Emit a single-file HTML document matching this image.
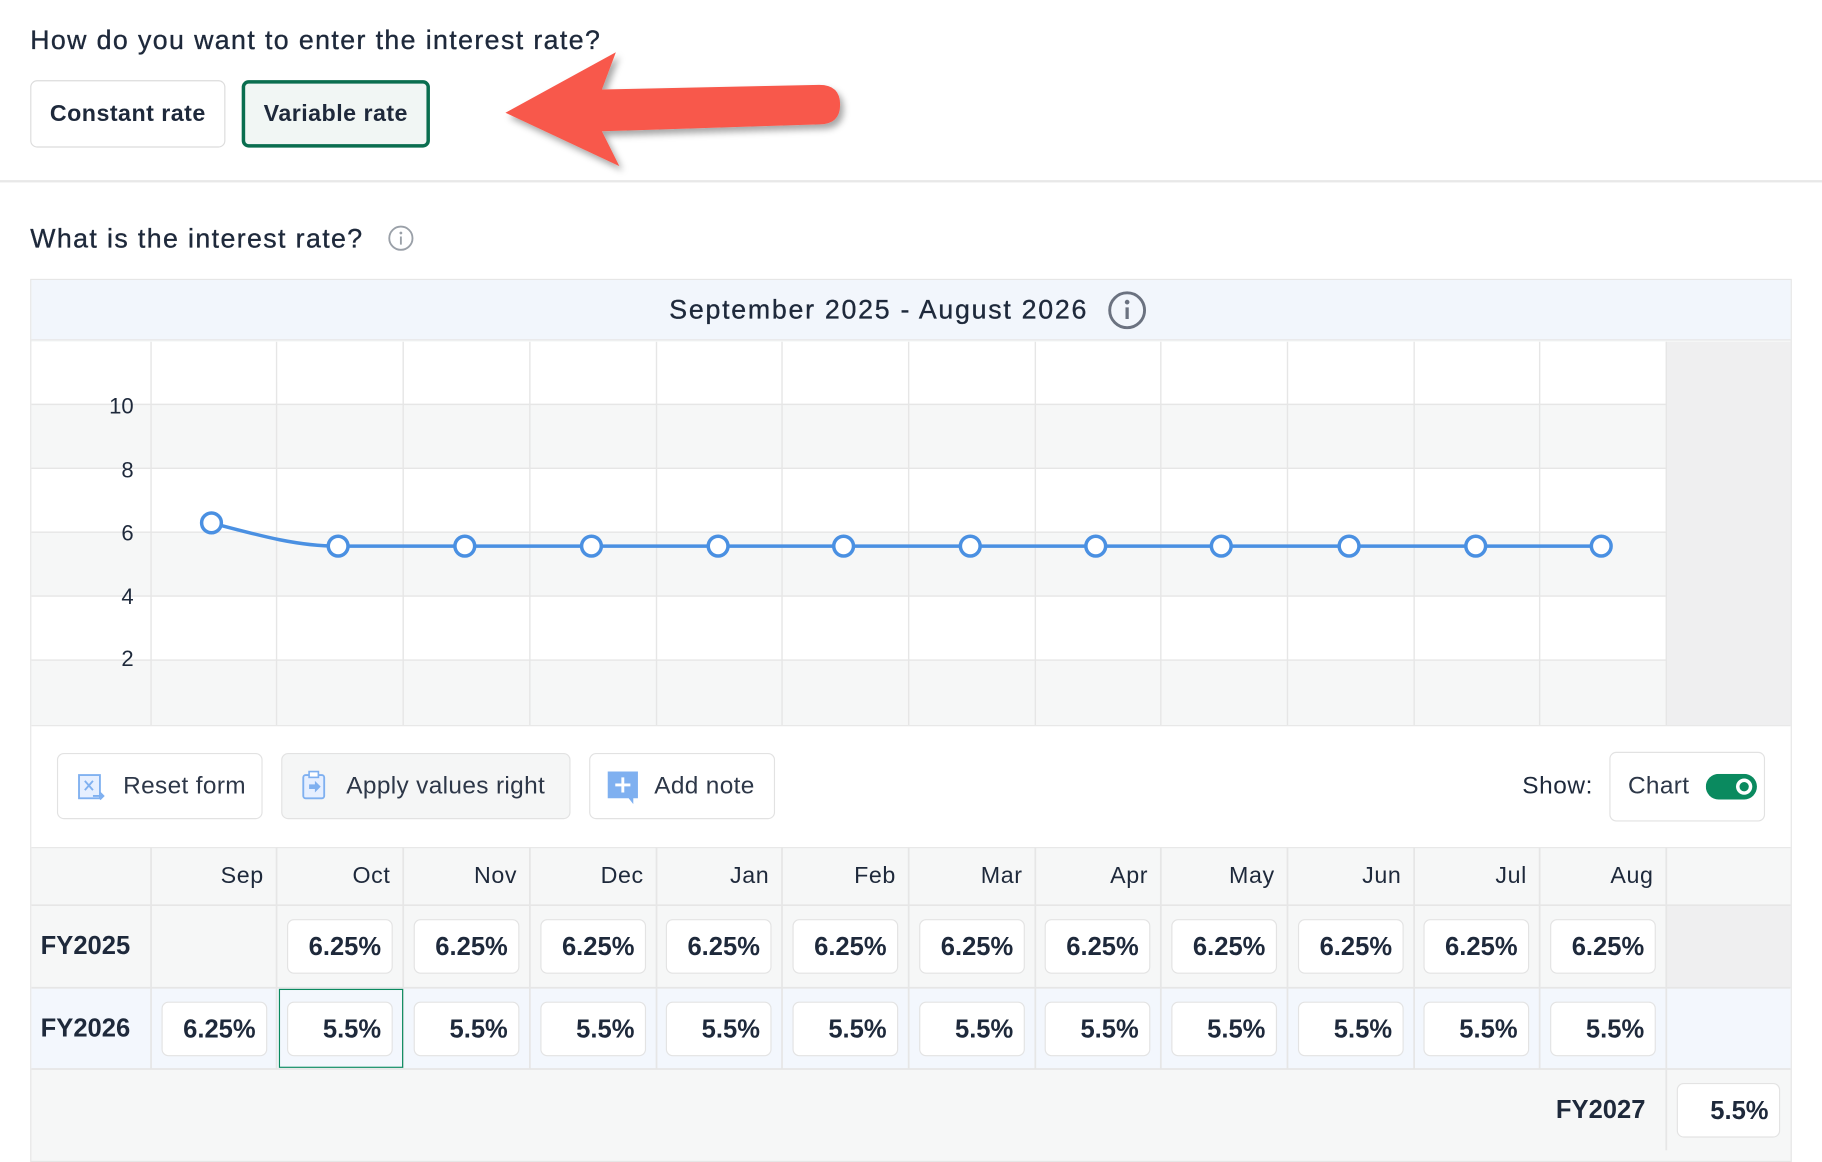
<!DOCTYPE html>
<html><head><meta charset="utf-8"><style>
*{box-sizing:border-box;margin:0;padding:0}
html,body{width:1822px;height:1150px;overflow:hidden;background:#fff}
#w{position:absolute;left:0;top:0;width:1568px;height:990px;transform:scale(1.16199);transform-origin:0 0;font-family:"Liberation Sans",sans-serif;color:#1e293b}
.a{position:absolute}
.btn{position:absolute;border:1.5px solid #dcdcdc;border-radius:6px;font-size:20px;display:flex;align-items:center;justify-content:center;font-weight:bold;letter-spacing:.4px}
.tb{position:absolute;border:1.5px solid #e2e2e2;border-radius:6px;font-size:21px;display:flex;align-items:center;color:#2d3748;background:#fff;letter-spacing:.3px}
.inp{position:absolute;background:#fff;border:1.5px solid #e3e3e3;border-radius:6px;height:47px;font-size:22px;font-weight:bold;text-align:right;padding-right:9px;line-height:45px}
.mon{position:absolute;top:730px;height:49px;line-height:49px;font-size:20px;text-align:right;color:#1e293b;letter-spacing:.5px}
.fy{position:absolute;left:35px;font-size:22px;font-weight:bold}
.h{position:absolute;font-size:23px;letter-spacing:1.2px;color:#1e293b;-webkit-text-stroke:.3px #1e293b}
</style></head><body><div id="w">
<div class="h" style="left:26px;top:21px">How do you want to enter the interest rate?</div>
<div class="btn" style="left:26px;top:69px;width:168px;height:58px">Constant rate</div>
<div class="btn" style="left:208px;top:69px;width:162px;height:58px;border:3px solid #0a6e4f;background:#f1f6f4">Variable rate</div>
<svg class="a" style="left:420px;top:35px" width="320" height="120"><defs><filter id="s"><feDropShadow dx="3" dy="4" stdDeviation="3" flood-color="#000" flood-opacity=".35"/></filter></defs>
<path filter="url(#s)" fill="#f8584b" d="M15 62 L110 10 L98 42 L285 38 Q303 38 303 55 Q303 72 285 72 L98 78 L113 108 Z"/></svg>
<div class="a" style="left:0;top:155px;width:1568px;height:2px;background:#e8e8e8"></div>
<div class="h" style="left:26px;top:192px">What is the interest rate?</div>
<svg class="a" style="left:333px;top:193px" width="24" height="24"><circle cx="12" cy="12" r="10" fill="none" stroke="#9aa0a8" stroke-width="1.6"/><circle cx="12" cy="7.5" r="1.2" fill="#9aa0a8"/><path d="M12 10.5v7" stroke="#9aa0a8" stroke-width="1.6"/></svg>
<div class="a" style="left:26px;top:240px;width:1516px;height:760px;border:1.5px solid #e6e6e6;background:#f6f7f7"></div>
<div class="a" style="left:27px;top:241px;width:1514px;height:52px;background:#f2f6fc;border-bottom:1.5px solid #e6e6e6"></div>
<div class="h" style="left:576px;top:253px;letter-spacing:1.5px">September 2025 - August 2026</div>
<svg class="a" style="left:953px;top:250px" width="34" height="34"><circle cx="17" cy="17" r="15" fill="none" stroke="#6b7280" stroke-width="2.5"/><circle cx="17" cy="10" r="2" fill="#6b7280"/><path d="M17 14.5v10" stroke="#6b7280" stroke-width="2.8"/></svg>
<svg class="a" style="left:27px;top:294px" width="1514" height="331">
<rect x="0" y="0" width="1514" height="331" fill="#fff"/>
<rect x="0" y="54" width="1407" height="55" fill="#f6f7f7"/><rect x="0" y="164" width="1407" height="55" fill="#f6f7f7"/><rect x="0" y="274" width="1407" height="57" fill="#f6f7f7"/>
<rect x="1407" y="0" width="107" height="331" fill="#efeff0"/>
<g stroke="#e6e6e6" stroke-width="1.2"><path d="M0 54H1407M0 109H1407M0 164H1407M0 219H1407M0 274H1407"/>
<path d="M103 0V331M211 0V331M320 0V331M429 0V331M538 0V331M646 0V331M755 0V331M864 0V331M972 0V331M1081 0V331M1190 0V331M1298 0V331M1407 0V331"/></g>
<g font-size="19" fill="#1e293b" text-anchor="end" font-family="Liberation Sans"><text x="88" y="62">10</text><text x="88" y="117">8</text><text x="88" y="171">6</text><text x="88" y="226">4</text><text x="88" y="279">2</text></g>
<path d="M155 156 C200 168 230 176 264 176 H1351" fill="none" stroke="#4a90e2" stroke-width="3"/>
<g fill="#fff" stroke="#4a90e2" stroke-width="3"><circle cx="155" cy="156" r="8.5"/><circle cx="264" cy="176" r="8.5"/><circle cx="373" cy="176" r="8.5"/><circle cx="482" cy="176" r="8.5"/><circle cx="591" cy="176" r="8.5"/><circle cx="699" cy="176" r="8.5"/><circle cx="808" cy="176" r="8.5"/><circle cx="916" cy="176" r="8.5"/><circle cx="1024" cy="176" r="8.5"/><circle cx="1134" cy="176" r="8.5"/><circle cx="1243" cy="176" r="8.5"/><circle cx="1351" cy="176" r="8.5"/></g>
</svg>
<div class="a" style="left:27px;top:624px;width:1514px;height:106px;background:#fff;border-top:1.5px solid #e6e6e6;border-bottom:1.5px solid #e6e6e6"></div>
<div class="tb" style="left:49px;top:648px;width:177px;height:57px;padding-left:56px">Reset form</div>
<svg class="a" style="left:66px;top:665px" width="26" height="26"><rect x="2" y="2" width="18" height="20" fill="#e6efff" stroke="#7fb0f0" stroke-width="1.6"/><path d="M7 7l7 8M14 7l-7 8" stroke="#7fb0f0" stroke-width="1.6"/><path d="M14 20h9M20 17l3 3-3 3" stroke="#7fb0f0" stroke-width="1.6" fill="none"/></svg>
<div class="tb" style="left:242px;top:648px;width:249px;height:57px;padding-left:55px;background:#f5f6f6">Apply values right</div>
<svg class="a" style="left:259px;top:663px" width="24" height="26"><rect x="2" y="4" width="18" height="20" rx="2" fill="#e6efff" stroke="#7fb0f0" stroke-width="1.6"/><rect x="7" y="1" width="8" height="5" fill="#fff" stroke="#7fb0f0" stroke-width="1.4"/><path d="M7 12h5v-3l5 5-5 5v-3H7z" fill="#7fb0f0"/></svg>
<div class="tb" style="left:507px;top:648px;width:160px;height:57px;padding-left:55px">Add note</div>
<svg class="a" style="left:522px;top:663px" width="28" height="30"><path d="M1 1H27V24H23V29L19 24H1Z" fill="#7fb0f0"/><path d="M14 6v13M7.5 12.5h13" stroke="#fff" stroke-width="2.5"/></svg>
<div class="a" style="left:1310px;top:665px;font-size:21px;letter-spacing:.5px">Show:</div>
<div class="tb" style="left:1385px;top:647px;width:134px;height:60px;padding-left:15px">Chart</div>
<svg class="a" style="left:1468px;top:666px" width="46" height="22"><rect x="0" y="0" width="44" height="22" rx="11" fill="#0a8a5f"/><circle cx="33" cy="11" r="7" fill="#fff"/><circle cx="33" cy="11" r="4" fill="#0a8a5f"/></svg>
<div class="a" style="left:27px;top:779px;width:1407px;height:71px;background:#f6f7f7"></div>
<div class="a" style="left:1434px;top:779px;width:107px;height:71px;background:#efeff0"></div>
<div class="a" style="left:27px;top:850px;width:1514px;height:70px;background:#f3f7fd"></div>
<svg class="a" style="left:27px;top:729px" width="1514" height="261"><g stroke="#e6e6e6" stroke-width="1.5"><path d="M0 50H1514M0 121H1514M0 191H1514"/><path d="M103 0V191M211 0V191M320 0V191M429 0V191M538 0V191M646 0V191M755 0V191M864 0V191M972 0V191M1081 0V191M1190 0V191M1298 0V191M1407 0V261"/></g></svg>
<div class="mon" style="left:130px;width:97px">Sep</div><div class="mon" style="left:238px;width:98px">Oct</div><div class="mon" style="left:347px;width:98px">Nov</div><div class="mon" style="left:456px;width:98px">Dec</div><div class="mon" style="left:565px;width:97px">Jan</div><div class="mon" style="left:673px;width:98px">Feb</div><div class="mon" style="left:782px;width:98px">Mar</div><div class="mon" style="left:891px;width:97px">Apr</div><div class="mon" style="left:999px;width:98px">May</div><div class="mon" style="left:1108px;width:98px">Jun</div><div class="mon" style="left:1217px;width:97px">Jul</div><div class="mon" style="left:1325px;width:98px">Aug</div>
<div class="fy" style="top:801px">FY2025</div><div class="fy" style="top:872px">FY2026</div>
<div class="inp" style="left:247px;top:791px;width:91px">6.25%</div><div class="inp" style="left:356px;top:791px;width:91px">6.25%</div><div class="inp" style="left:465px;top:791px;width:91px">6.25%</div><div class="inp" style="left:573px;top:791px;width:91px">6.25%</div><div class="inp" style="left:682px;top:791px;width:91px">6.25%</div><div class="inp" style="left:791px;top:791px;width:91px">6.25%</div><div class="inp" style="left:899px;top:791px;width:91px">6.25%</div><div class="inp" style="left:1008px;top:791px;width:91px">6.25%</div><div class="inp" style="left:1117px;top:791px;width:91px">6.25%</div><div class="inp" style="left:1225px;top:791px;width:91px">6.25%</div><div class="inp" style="left:1334px;top:791px;width:91px">6.25%</div>
<div class="inp" style="left:139px;top:862px;width:91px">6.25%</div>
<div class="a" style="left:240px;top:851px;width:107px;height:68px;border:1.5px solid #0a8a5f"></div>
<div class="inp" style="left:247px;top:862px;width:91px">5.5%</div><div class="inp" style="left:356px;top:862px;width:91px">5.5%</div><div class="inp" style="left:465px;top:862px;width:91px">5.5%</div><div class="inp" style="left:573px;top:862px;width:91px">5.5%</div><div class="inp" style="left:682px;top:862px;width:91px">5.5%</div><div class="inp" style="left:791px;top:862px;width:91px">5.5%</div><div class="inp" style="left:899px;top:862px;width:91px">5.5%</div><div class="inp" style="left:1008px;top:862px;width:91px">5.5%</div><div class="inp" style="left:1117px;top:862px;width:91px">5.5%</div><div class="inp" style="left:1225px;top:862px;width:91px">5.5%</div><div class="inp" style="left:1334px;top:862px;width:91px">5.5%</div>
<div class="a" style="left:1339px;top:942px;font-size:22px;font-weight:bold">FY2027</div>
<div class="inp" style="left:1443px;top:932px;width:89px">5.5%</div>
</div></body></html>
